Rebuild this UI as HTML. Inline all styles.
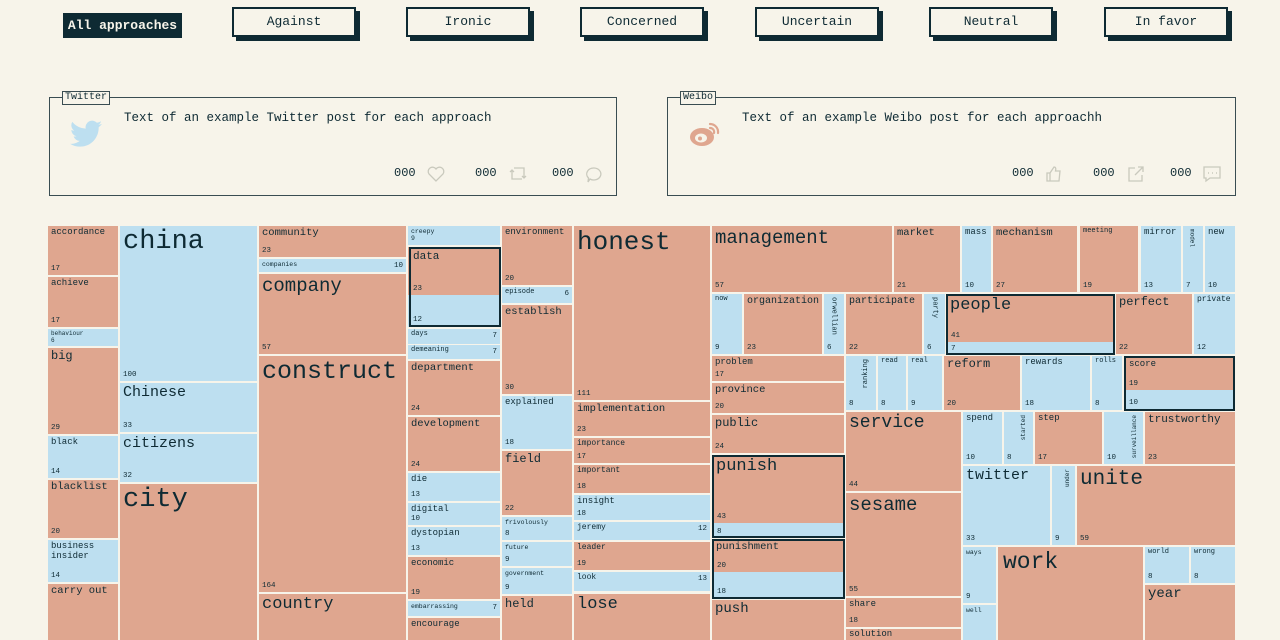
<!DOCTYPE html>
<html><head><meta charset="utf-8"><style>
*{margin:0;padding:0}
body{width:1280px;height:640px;overflow:hidden;background:#f7f4ea;font-family:"Liberation Mono","DejaVu Sans Mono",monospace;color:#0e2a33;position:relative}
.btn{position:absolute;top:7px;width:120px;height:26px;border:2px solid #0e2a33;background:#f7f4ea;box-shadow:4px 4px 0 #0e2a33;font-size:13px;text-align:center;line-height:26px}
.all{position:absolute;left:63px;top:13px;width:119px;height:25px;background:#0e2a33;color:#f7f4ea;font-size:13px;font-weight:bold;text-align:center;line-height:25px}
.card{position:absolute;top:97px;height:97px;border:1px solid #3a4d52}
.tab{position:absolute;left:12px;top:-7px;border:1px solid #3a4d52;background:#f7f4ea;font-size:10px;padding:0 2px;line-height:12px}
.txt{position:absolute;left:74px;top:13px;font-size:12.5px}
.st{position:absolute;top:68px;font-size:12px}
.c{position:absolute;box-sizing:border-box;padding:2px 3px;font-size:10.5px;line-height:1.1;overflow:hidden;white-space:nowrap}
.s{background:#dfa68f}.b{background:#bddff0}
.c i{font-style:normal;position:absolute;left:3px;bottom:2px;font-size:7.5px}
.c em{font-style:normal;position:absolute;right:3px;top:3px;font-size:7.5px}
.sm{font-size:7.5px}
.r{writing-mode:vertical-rl;font-size:7px}
.bd{position:absolute;border:2px solid #0e2a33;box-sizing:border-box}
</style></head><body>
<div class="all">All approaches</div>
<div class="btn" style="left:232px">Against</div>
<div class="btn" style="left:406px">Ironic</div>
<div class="btn" style="left:580px">Concerned</div>
<div class="btn" style="left:755px">Uncertain</div>
<div class="btn" style="left:929px">Neutral</div>
<div class="btn" style="left:1104px">In favor</div>

<div class="card" style="left:49px;width:566px">
<div class="tab">Twitter</div>
<svg style="position:absolute;left:20px;top:22px" width="32" height="28" viewBox="0 0 24 20"><path fill="#bddff0" d="M24 2.4a10 10 0 0 1-2.8.8A5 5 0 0 0 23.3.4a10 10 0 0 1-3.1 1.2A4.9 4.9 0 0 0 11.8 6 14 14 0 0 1 1.7.9a4.9 4.9 0 0 0 1.5 6.6A4.900 4.900 0 0 1 1 6.900 4.900 4.900 0 0 0 4.900 11.700a5 5 0 0 1-2.200.1 4.900 4.900 0 0 0 4.600 3.400A9.900 9.900 0 0 1 0 17.300 14 14 0 0 0 7.500 19.500c9 0 14-7.500 14-14v-.6A10 10 0 0 0 24 2.400z"/></svg>
<div class="txt">Text of an example Twitter post for each approach</div>
<div class="st" style="left:344px">000</div>
<svg style="position:absolute;left:377px;top:68px" width="18" height="16" viewBox="0 0 18 16"><path d="M9 15 2 8a4 4 0 0 1 7-5 4 4 0 0 1 7 5z" fill="none" stroke="#c9c9bd" stroke-width="1.3"/></svg>
<div class="st" style="left:425px">000</div>
<svg style="position:absolute;left:459px;top:67px" width="18" height="18" viewBox="0 0 18 18"><path d="M3 5v9h10M5 3h10v10M1 7l2-2 2 2M13 11l2 2 2-2" fill="none" stroke="#c9c9bd" stroke-width="1.3"/></svg>
<div class="st" style="left:502px">000</div>
<svg style="position:absolute;left:535px;top:68px" width="18" height="18" viewBox="0 0 18 18"><path d="M9 2a7 6 0 1 1-4 11l-2 3 .5-4A7 6 0 0 1 9 2z" fill="none" stroke="#c9c9bd" stroke-width="1.3"/></svg>
</div>

<div class="card" style="left:667px;width:567px">
<div class="tab">Weibo</div>
<svg style="position:absolute;left:20px;top:22px" width="34" height="28" viewBox="0 0 34 28"><ellipse cx="14" cy="17" rx="12" ry="9" fill="#dfa68f"/><ellipse cx="13" cy="18" rx="6" ry="4.5" fill="#f7f4ea"/><circle cx="12" cy="18.5" r="2" fill="#dfa68f"/><path d="M22 4a8 8 0 0 1 8 9M22 8a4 4 0 0 1 4 5" fill="none" stroke="#dfa68f" stroke-width="2.2" stroke-linecap="round"/></svg>
<div class="txt">Text of an example Weibo post for each approachh</div>
<div class="st" style="left:344px">000</div>
<svg style="position:absolute;left:377px;top:67px" width="18" height="18" viewBox="0 0 18 18"><path d="M2 8h3v8H2zM5 8l4-6c2 0 2 2 1.500 4H15l-1 10H5" fill="none" stroke="#c9c9bd" stroke-width="1.3"/></svg>
<div class="st" style="left:425px">000</div>
<svg style="position:absolute;left:459px;top:67px" width="18" height="18" viewBox="0 0 18 18"><path d="M15 10v6H2V3h6M11 2h5v5M16 2 8 10" fill="none" stroke="#c9c9bd" stroke-width="1.3"/></svg>
<div class="st" style="left:502px">000</div>
<svg style="position:absolute;left:534px;top:67px" width="20" height="18" viewBox="0 0 20 18"><path d="M2 2h16v11H8l-4 3v-3H2z" fill="none" stroke="#c9c9bd" stroke-width="1.3"/><path d="M6 8h1M10 8h1M14 8h1" stroke="#c9c9bd" stroke-width="1.5"/></svg>
</div>

<!-- col1 -->
<div class="c s sm" style="left:48px;top:226px;width:70px;height:49px;font-size:9px">accordance<i>17</i></div>
<div class="c s" style="left:48px;top:277px;width:70px;height:50px;font-size:9px">achieve<i>17</i></div>
<div class="c b" style="left:48px;top:329px;width:70px;height:17px;font-size:6px">behaviour<br>6</div>
<div class="c s" style="left:48px;top:348px;width:70px;height:86px;font-size:12px">big<i>29</i></div>
<div class="c b" style="left:48px;top:436px;width:70px;height:42px;font-size:9px">black<i>14</i></div>
<div class="c s" style="left:48px;top:480px;width:70px;height:58px">blacklist<i>20</i></div>
<div class="c b" style="left:48px;top:540px;width:70px;height:42px;font-size:9px">business<br>insider<i>14</i></div>
<div class="c s" style="left:48px;top:584px;width:70px;height:56px">carry out</div>
<!-- col2 -->
<div class="c b" style="left:120px;top:226px;width:137px;height:155px;font-size:27px">china<i>100</i></div>
<div class="c b" style="left:120px;top:383px;width:137px;height:49px;font-size:15px">Chinese<i>33</i></div>
<div class="c b" style="left:120px;top:434px;width:137px;height:48px;font-size:15px">citizens<i>32</i></div>
<div class="c s" style="left:120px;top:484px;width:137px;height:156px;font-size:27px">city</div>
<!-- col3 -->
<div class="c s" style="left:259px;top:226px;width:147px;height:31px">community<i>23</i></div>
<div class="c b" style="left:259px;top:259px;width:147px;height:13px;font-size:6.5px;padding-top:2px">companies<em style="top:3px">10</em></div>
<div class="c s" style="left:259px;top:274px;width:147px;height:80px;font-size:19px">company<i>57</i></div>
<div class="c s" style="left:259px;top:356px;width:147px;height:236px;font-size:25px">construct<i>164</i></div>
<div class="c s" style="left:259px;top:594px;width:147px;height:46px;font-size:17px">country</div>
<!-- col4 -->
<div class="c b" style="left:408px;top:226px;width:92px;height:19px;font-size:6.5px">creepy<br>9</div>
<div class="c s" style="left:408px;top:247px;width:92px;height:48px;font-size:11px;padding:4px 5px">data<i style="left:5px">23</i></div>
<div class="c b" style="left:408px;top:295px;width:92px;height:32px"><i style="left:5px;bottom:3px">12</i></div>
<div class="bd" style="left:409px;top:247px;width:92px;height:80px"></div>
<div class="c b" style="left:408px;top:329px;width:92px;height:15px;font-size:7px">days<em>7</em></div>
<div class="c b" style="left:408px;top:345px;width:92px;height:14px;font-size:7px">demeaning<em>7</em></div>
<div class="c s" style="left:408px;top:361px;width:92px;height:54px">department<i>24</i></div>
<div class="c s" style="left:408px;top:417px;width:92px;height:54px">development<i>24</i></div>
<div class="c b" style="left:408px;top:473px;width:92px;height:28px;font-size:9px">die<i>13</i></div>
<div class="c b" style="left:408px;top:503px;width:92px;height:22px;font-size:9px">digital<i>10</i></div>
<div class="c b" style="left:408px;top:527px;width:92px;height:28px;font-size:9px">dystopian<i>13</i></div>
<div class="c s" style="left:408px;top:557px;width:92px;height:42px;font-size:9px">economic<i>19</i></div>
<div class="c b" style="left:408px;top:601px;width:92px;height:15px;font-size:6.5px">embarrassing<em>7</em></div>
<div class="c s" style="left:408px;top:618px;width:92px;height:22px;font-size:9px">encourage</div>
<!-- col5 -->
<div class="c s" style="left:502px;top:226px;width:70px;height:59px;font-size:9px">environment<i>20</i></div>
<div class="c b" style="left:502px;top:287px;width:70px;height:16px;font-size:7px">episode<em>6</em></div>
<div class="c s" style="left:502px;top:305px;width:70px;height:89px">establish<i>30</i></div>
<div class="c b" style="left:502px;top:396px;width:70px;height:53px;font-size:9px">explained<i>18</i></div>
<div class="c s" style="left:502px;top:451px;width:70px;height:64px;font-size:12px">field<i>22</i></div>
<div class="c b" style="left:502px;top:517px;width:70px;height:23px;font-size:6.5px">frivolously<i>8</i></div>
<div class="c b" style="left:502px;top:542px;width:70px;height:24px;font-size:6.5px">future<i>9</i></div>
<div class="c b" style="left:502px;top:568px;width:70px;height:26px;font-size:6.5px">government<i>9</i></div>
<div class="c s" style="left:502px;top:596px;width:70px;height:44px;font-size:12px">held</div>
<!-- col6 -->
<div class="c s" style="left:574px;top:226px;width:136px;height:174px;font-size:26px">honest<i>111</i></div>
<div class="c s" style="left:574px;top:402px;width:136px;height:34px">implementation<i>23</i></div>
<div class="c s" style="left:574px;top:438px;width:136px;height:25px;font-size:8px">importance<i>17</i></div>
<div class="c s" style="left:574px;top:465px;width:136px;height:28px;font-size:8px">important<i>18</i></div>
<div class="c b" style="left:574px;top:495px;width:136px;height:25px;font-size:9px">insight<i>18</i></div>
<div class="c b" style="left:574px;top:522px;width:136px;height:18px;font-size:8px">jeremy<em>12</em></div>
<div class="c s" style="left:574px;top:542px;width:136px;height:28px;font-size:8px">leader<i>19</i></div>
<div class="c b" style="left:574px;top:572px;width:136px;height:19px;font-size:8px">look<em>13</em></div>
<div class="c s" style="left:574px;top:594px;width:136px;height:46px;font-size:17px">lose</div>
<!-- right block row1 -->
<div class="c s" style="left:712px;top:226px;width:180px;height:66px;font-size:19px">management<i>57</i></div>
<div class="c s" style="left:894px;top:226px;width:66px;height:66px">market<i>21</i></div>
<div class="c b" style="left:962px;top:226px;width:29px;height:66px;font-size:9px">mass<i>10</i></div>
<div class="c s" style="left:993px;top:226px;width:84px;height:66px">mechanism<i>27</i></div>
<div class="c s" style="left:1080px;top:226px;width:58px;height:66px;font-size:7px">meeting<i>19</i></div>
<div class="c b" style="left:1141px;top:226px;width:40px;height:66px;font-size:9px">mirror<i>13</i></div>
<div class="c b" style="left:1183px;top:226px;width:20px;height:66px"><span class="r" style="position:absolute;left:5px;top:3px;font-size:6px">model</span><i>7</i></div>
<div class="c b" style="left:1205px;top:226px;width:30px;height:66px;font-size:9px">new<i>10</i></div>
<!-- row2 -->
<div class="c b" style="left:712px;top:294px;width:30px;height:60px;font-size:7px">now<i>9</i></div>
<div class="c s" style="left:744px;top:294px;width:78px;height:60px;font-size:10px">organization<i>23</i></div>
<div class="c b" style="left:824px;top:294px;width:20px;height:60px"><span class="r" style="position:absolute;left:5px;top:3px">orwellian</span><i>6</i></div>
<div class="c s" style="left:846px;top:294px;width:76px;height:60px;font-size:10px">participate<i>22</i></div>
<div class="c b" style="left:924px;top:294px;width:21px;height:60px"><span class="r" style="position:absolute;left:6px;top:3px">party</span><i>6</i></div>
<div class="c s" style="left:946px;top:294px;width:168px;height:48px;font-size:17px;padding:3px 4px">people<i style="left:5px">41</i></div>
<div class="c b" style="left:946px;top:342px;width:168px;height:12px"><i style="bottom:1px;left:5px">7</i></div>
<div class="bd" style="left:946px;top:294px;width:169px;height:61px"></div>
<div class="c s" style="left:1116px;top:294px;width:76px;height:60px;font-size:12px">perfect<i>22</i></div>
<div class="c b" style="left:1194px;top:294px;width:41px;height:60px;font-size:8px">private<i>12</i></div>
<!-- left sub column -->
<div class="c s" style="left:712px;top:356px;width:132px;height:25px;font-size:9px">problem<i>17</i></div>
<div class="c s" style="left:712px;top:383px;width:132px;height:30px">province<i>20</i></div>
<div class="c s" style="left:712px;top:415px;width:132px;height:38px;font-size:12px">public<i>24</i></div>
<div class="c s" style="left:712px;top:455px;width:132px;height:68px;font-size:17px;padding:3px 4px">punish<i style="left:5px">43</i></div>
<div class="c b" style="left:712px;top:523px;width:132px;height:14px"><i style="bottom:1px;left:5px">8</i></div>
<div class="bd" style="left:712px;top:455px;width:133px;height:83px"></div>
<div class="c s" style="left:712px;top:539px;width:132px;height:33px;padding:3px 4px">punishment<i style="left:5px">20</i></div>
<div class="c b" style="left:712px;top:572px;width:132px;height:26px"><i style="left:5px">18</i></div>
<div class="bd" style="left:712px;top:539px;width:133px;height:60px"></div>
<div class="c s" style="left:712px;top:600px;width:132px;height:40px;font-size:14px">push</div>
<!-- row3 mid -->
<div class="c b" style="left:846px;top:356px;width:30px;height:54px"><span class="r" style="position:absolute;left:17px;top:3px;transform:rotate(180deg)">ranking</span><i>8</i></div>
<div class="c b" style="left:878px;top:356px;width:28px;height:54px;font-size:7px">read<i>8</i></div>
<div class="c b" style="left:908px;top:356px;width:34px;height:54px;font-size:7px">real<i>9</i></div>
<div class="c s" style="left:944px;top:356px;width:76px;height:54px;font-size:12px">reform<i>20</i></div>
<div class="c b" style="left:1022px;top:356px;width:68px;height:54px;font-size:9px">rewards<i>18</i></div>
<div class="c b" style="left:1092px;top:356px;width:30px;height:54px;font-size:7px">rolls<i>8</i></div>
<div class="c s" style="left:1124px;top:356px;width:111px;height:34px;font-size:9px;padding:4px 5px">score<i style="left:5px">19</i></div>
<div class="c b" style="left:1124px;top:390px;width:111px;height:20px"><i style="left:5px;bottom:3px">10</i></div>
<div class="bd" style="left:1124px;top:356px;width:111px;height:55px"></div>
<!-- service col -->
<div class="c s" style="left:846px;top:412px;width:115px;height:79px;font-size:18px">service<i>44</i></div>
<div class="c s" style="left:846px;top:493px;width:115px;height:103px;font-size:19px">sesame<i>55</i></div>
<div class="c s" style="left:846px;top:598px;width:115px;height:29px;font-size:9px">share<i>18</i></div>
<div class="c s" style="left:846px;top:629px;width:115px;height:11px;font-size:9px;padding-top:1px">solution</div>
<!-- s row -->
<div class="c b" style="left:963px;top:412px;width:39px;height:52px;font-size:9px">spend<i>10</i></div>
<div class="c b" style="left:1004px;top:412px;width:29px;height:52px"><span class="r" style="position:absolute;left:17px;top:3px;transform:rotate(180deg);font-size:6px">started</span><i>8</i></div>
<div class="c s" style="left:1035px;top:412px;width:67px;height:52px;font-size:9px">step<i>17</i></div>
<div class="c b" style="left:1104px;top:412px;width:39px;height:52px"><span class="r" style="position:absolute;left:28px;top:3px;transform:rotate(180deg);font-size:6px">surveillance</span><i>10</i></div>
<div class="c s" style="left:1145px;top:412px;width:90px;height:52px;font-size:11px">trustworthy<i>23</i></div>
<div class="c b" style="left:963px;top:466px;width:87px;height:79px;font-size:15px">twitter<i>33</i></div>
<div class="c b" style="left:1052px;top:466px;width:23px;height:79px"><span class="r" style="position:absolute;left:13px;top:3px;transform:rotate(180deg);font-size:6px">under</span><i>9</i></div>
<div class="c s" style="left:1077px;top:466px;width:158px;height:79px;font-size:21px">unite<i>59</i></div>
<div class="c b" style="left:963px;top:547px;width:33px;height:56px;font-size:6.5px">ways<i>9</i></div>
<div class="c b" style="left:963px;top:605px;width:33px;height:35px;font-size:6.5px">well</div>
<div class="c s" style="left:998px;top:547px;width:145px;height:93px;font-size:23px;padding:3px 5px">work</div>
<div class="c b" style="left:1145px;top:547px;width:44px;height:36px;font-size:7px">world<i>8</i></div>
<div class="c b" style="left:1191px;top:547px;width:44px;height:36px;font-size:7px">wrong<i>8</i></div>
<div class="c s" style="left:1145px;top:585px;width:90px;height:55px;font-size:14px">year</div>
</body></html>
